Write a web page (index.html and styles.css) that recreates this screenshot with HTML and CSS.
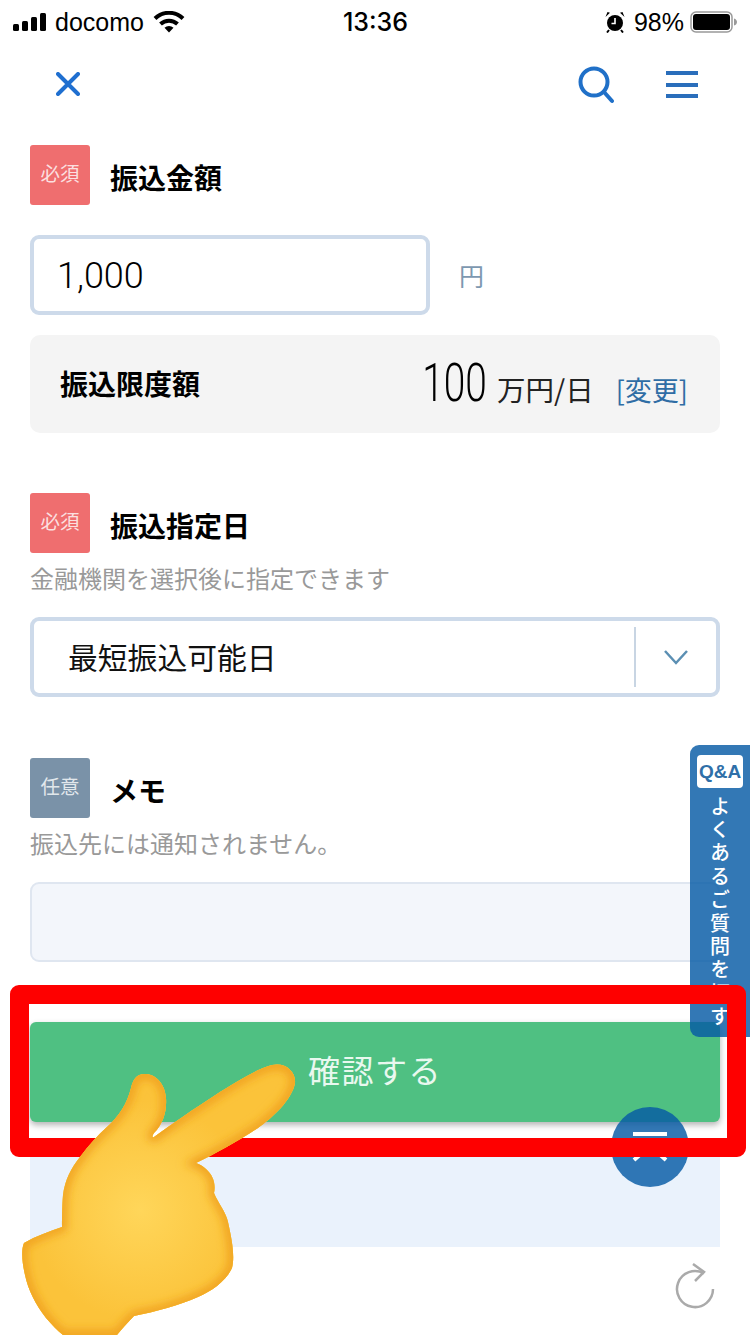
FILE: index.html

```html
<!DOCTYPE html>
<html lang="ja">
<head>
  <meta charset="UTF-8" />
  <meta name="viewport" content="width=device-width, initial-scale=1.0"/>
  <title>振込</title>
  <link rel="stylesheet" href="styles.css">
</head>
<body>
  <div class="status">
    <div class="status-left">
      <svg class="signal" width="34" height="18" viewBox="0 0 34 18">
        <rect x="0" y="11" width="6" height="7" rx="1.5"/>
        <rect x="9" y="8" width="6" height="10" rx="1.5"/>
        <rect x="18" y="4" width="6" height="14" rx="1.5"/>
        <rect x="27" y="0" width="6" height="18" rx="1.5"/>
      </svg>
      <span class="carrier">docomo</span>
      <svg class="wifi" width="32" height="22" viewBox="0 0 32 22">
        <path d="M2 7.5a20 20 0 0 1 28 0" fill="none" stroke="#000" stroke-width="4"/>
        <path d="M7.5 13a12.5 12.5 0 0 1 17 0" fill="none" stroke="#000" stroke-width="4"/>
        <path d="M11.5 16.8a6.5 6.5 0 0 1 9 0L16 21.5z"/>
      </svg>
    </div>
    <div class="status-time">13:36</div>
    <div class="status-right">
      <svg class="alarm" width="22" height="22" viewBox="0 0 22 22">
        <circle cx="11" cy="12" r="8"/>
        <path d="M1.5 6L6 1.8 3.5 1zM20.5 6L16 1.8 18.5 1z"/>
        <path d="M11 7v5.5H7.5" fill="none" stroke="#fff" stroke-width="1.6"/>
        <path d="M5 19l-2 2.5M17 19l2 2.5" stroke="#000" stroke-width="2"/>
      </svg>
      <span class="battery-text">98%</span>
      <svg class="battery" width="48" height="22" viewBox="0 0 48 22">
        <rect x="1" y="1" width="41" height="20" rx="5" fill="#fff" stroke="#999" stroke-width="1.5"/>
        <rect x="3" y="3" width="37" height="16" rx="3"/>
        <path d="M44 7.5c2 .5 3 2 3 3.500s-1 3-3 3.500z" fill="#999"/>
      </svg>
    </div>
  </div>

  <div class="nav">
    <svg class="nav-close" width="24" height="24" viewBox="0 0 24 24">
      <path d="M2 2l20 20M22 2L2 22" fill="none" stroke="#1f6fd0" stroke-width="4" stroke-linecap="round"/>
    </svg>
    <div class="nav-right">
      <svg width="36" height="38" viewBox="0 0 36 38">
        <circle cx="16" cy="16" r="13.5" fill="none" stroke="#2070c8" stroke-width="4"/>
        <path d="M26 26l8 9" fill="none" stroke="#2070c8" stroke-width="4" stroke-linecap="round"/>
      </svg>
      <div class="burger"><i></i><i></i><i></i></div>
    </div>
  </div>

  <div class="form">
    <div class="field-head">
      <span class="badge">必須</span>
      <span class="field-title">振込金額</span>
    </div>
    <div class="amount-row">
      <input class="amount-input" type="text" value="1,000">
      <span class="yen">円</span>
    </div>
    <div class="limit-box">
      <span class="limit-title">振込限度額</span>
      <div class="limit-value">
        <span class="limit-num">100</span>
        <span class="limit-unit">万円/日</span>
        <span class="limit-link">[変更]</span>
      </div>
    </div>

    <div class="field-head date-head">
      <span class="badge">必須</span>
      <span class="field-title">振込指定日</span>
    </div>
    <p class="hint">金融機関を選択後に指定できます</p>
    <div class="select-box">
      <span class="select-text">最短振込可能日</span>
      <span class="select-arrow">
        <svg width="26" height="16" viewBox="0 0 26 16">
          <path d="M2 2l11 12L24 2" fill="none" stroke="#5b8fb3" stroke-width="2.5"/>
        </svg>
      </span>
    </div>

    <div class="field-head memo-head">
      <span class="badge badge-optional">任意</span>
      <span class="field-title">メモ</span>
    </div>
    <p class="hint">振込先には通知されません。</p>
    <input class="memo-input" type="text">

    <button class="confirm">確認する</button>
    <div class="panel"></div>
  </div>

  <div class="page-foot">
    <svg width="40" height="46" viewBox="0 0 40 46">
      <path d="M29 10.5A18 18 0 1 0 38 26" fill="none" stroke="#aaa" stroke-width="2.5"/>
      <path d="M18 1l11 8-9 9" fill="none" stroke="#aaa" stroke-width="2.5"/>
    </svg>
  </div>

  <!-- floating stuff over the page -->
  <div class="qa-tab">
    <div class="qa-mark">Q&amp;A</div>
    <div class="qa-text">よくあるご質問を探す</div>
  </div>
  <div class="round-btn">
    <i class="round-bar"></i>
    <svg class="round-chevron" width="36" height="20" viewBox="0 0 36 20">
      <path d="M2 18L18 4l16 14" fill="none" stroke="#fff" stroke-width="4"/>
    </svg>
  </div>
  <div class="red-frame"></div>
  <svg class="hand" width="300" height="285" viewBox="0 1050 300 285">
    <defs>
      <path id="handShape" d="M295 1083C296 1071 285 1062 272 1065C262 1067 240 1079 214 1096C195 1108 172 1124 154 1137C152 1138 152 1136 154 1133C163 1124 167 1111 166 1098C165 1084 156 1074 145 1074C136 1074 133 1080 131 1088C127 1104 119 1116 108 1126C98 1135 88 1146 80 1157C71 1168 65 1180 63 1195C62 1208 62 1218 62 1227C50 1231 36 1236 24 1243C21 1250 22 1262 25 1275C28 1290 36 1305 46 1318C52 1325 58 1331 63 1335L117 1335C122 1329 128 1322 134 1316C155 1312 180 1305 198 1297C212 1291 226 1281 232 1268C235 1256 232 1240 228 1222C226 1212 218 1203 214 1193C216 1184 213 1175 206 1169C203 1166 199 1164 196 1163C215 1154 240 1140 258 1128C272 1118 292 1100 295 1083Z"/>
      <clipPath id="handClip"><use href="#handShape"/></clipPath>
      <filter id="soft" x="-20%" y="-20%" width="140%" height="140%"><feGaussianBlur stdDeviation="5"/></filter>
      <radialGradient id="skin" cx="140" cy="1210" r="110" gradientUnits="userSpaceOnUse">
        <stop offset="0" stop-color="#ffd65a"/>
        <stop offset="1" stop-color="#fbc33a"/>
      </radialGradient>
    </defs>
    <g clip-path="url(#handClip)">
      <rect x="0" y="1050" width="300" height="285" fill="#fbc33a"/>
      <rect x="0" y="1050" width="300" height="285" fill="url(#skin)"/>
      <use href="#handShape" fill="none" stroke="#ef9f1c" stroke-width="9" filter="url(#soft)"/>
    </g>
  </svg>
</body>
</html>
```

FILE: styles.css

```css
* { box-sizing: border-box; }
body {
  margin: 0;
  width: 750px;
  height: 1335px;
  overflow: hidden;
  position: relative;
  background: #fff;
  color: #000;
  font-family: "Noto Sans CJK JP", "Noto Sans", sans-serif;
}

/* status bar */
.status {
  height: 44px;
  padding: 0 12px 0 13px;
  display: flex;
  align-items: center;
  justify-content: space-between;
  font-family: "Liberation Sans", sans-serif;
  font-size: 25px;
}
.status-left, .status-right { flex: 1; display: flex; align-items: center; }
.status-right { justify-content: flex-end; }
.carrier { margin-left: 8px; }
.wifi { margin-left: 9px; }
.status-time { font-weight: 500; font-size: 25px; font-family: "Inter", sans-serif; }
.battery-text { margin: 0 6px 0 8px; }

/* nav */
.nav {
  height: 81px;
  padding: 0 52px 0 56px;
  display: flex;
  align-items: center;
  justify-content: space-between;
}
.nav-close { margin-bottom: 2px; }
.nav-right { display: flex; align-items: center; gap: 52px; }
.burger { display: flex; flex-direction: column; gap: 7.5px; }
.burger i { display: block; width: 32px; height: 4px; background: #2a6ebb; }

/* form */
.form { padding: 20px 30px 0; }
.field-head { display: flex; align-items: center; gap: 20px; height: 60px; }
.date-head { margin-top: 60px; }
.memo-head { margin-top: 61px; }
.badge {
  width: 60px;
  height: 60px;
  padding-bottom: 5px;
  border-radius: 3px;
  background: #ef6e6f;
  color: rgba(255, 255, 255, .8);
  font-size: 19.5px;
  display: flex;
  align-items: center;
  justify-content: center;
}
.badge-optional { background: #7a92a8; }
.field-title { font-size: 28px; font-weight: 700; padding-top: 4px; }
.amount-row { margin-top: 30px; display: flex; align-items: center; gap: 29px; }
.amount-input {
  width: 400px;
  height: 80px;
  padding: 2px 23px 0;
  border: 4px solid #cddaea;
  border-radius: 9px;
  background: #fff;
  color: #000;
  font-family: "Roboto", sans-serif;
  font-weight: 300;
  font-size: 36px;
  outline: none;
}
.yen { font-size: 25px; color: #7d98b0; }
.limit-box {
  margin-top: 20px;
  height: 98px;
  padding: 0 32px 3px 30px;
  border-radius: 10px;
  background: #f4f4f4;
  display: flex;
  align-items: center;
  justify-content: space-between;
}
.limit-title { font-size: 28px; font-weight: 700; }
.limit-value { display: flex; align-items: baseline; }
.limit-num {
  font-family: "Roboto", sans-serif;
  font-weight: 300;
  font-size: 54px;
  line-height: 1;
  display: inline-block;
  transform: scaleX(.72);
  transform-origin: right;
  margin-left: -24px;
}
.limit-unit { margin-left: 10px; font-size: 28.5px; color: #222; }
.limit-link { margin-left: 22px; font-size: 27px; color: #2f6da5; }
.hint {
  margin: 0;
  height: 64px;
  padding-top: 6px;
  font-size: 24px;
  line-height: 38px;
  color: #999;
}
.select-box {
  height: 80px;
  border: 4px solid #cddaea;
  border-radius: 9px;
  display: flex;
  align-items: center;
  justify-content: space-between;
}
.select-text { margin: 0 0 3px 34px; font-size: 29.8px; color: #111; }
.select-arrow {
  width: 82px;
  height: 60px;
  border-left: 2px solid #c8d5e3;
  display: flex;
  align-items: center;
  justify-content: center;
}
.memo-input {
  display: block;
  width: 690px;
  height: 80px;
  border: 2px solid #dfe6f0;
  border-radius: 9px;
  background: #f3f6fb;
  outline: none;
}
.confirm {
  display: block;
  width: 690px;
  height: 100px;
  margin-top: 60px;
  padding-bottom: 8px;
  border: 0;
  border-radius: 6px;
  background: #4fc082;
  color: #e9f8ef;
  font-family: inherit;
  font-size: 32px;
  letter-spacing: 1.5px;
  box-shadow: 0 3px 6px rgba(0, 0, 0, .3);
}
.panel { margin-top: 18px; height: 107px; background: #eaf2fc; }
.page-foot { padding: 16px 35px 0 0; display: flex; justify-content: flex-end; }

/* overlays */
.qa-tab {
  position: absolute;
  left: 690px;
  top: 745px;
  width: 60px;
  height: 292px;
  padding-top: 10px;
  border-radius: 9px 0 0 9px;
  background: rgba(6, 90, 165, .82);
  display: flex;
  flex-direction: column;
  align-items: center;
}
.qa-mark {
  width: 46px;
  height: 33px;
  border-radius: 4px;
  background: #fff;
  color: #2f6fa8;
  font-family: "Liberation Sans", sans-serif;
  font-size: 19px;
  font-weight: 700;
  line-height: 33px;
  text-align: center;
}
.qa-text {
  margin-top: 8px;
  writing-mode: vertical-rl;
  color: #fff;
  font-size: 20px;
  font-weight: 500;
  letter-spacing: 3.4px;
}
.round-btn {
  position: absolute;
  left: 611px;
  top: 1107px;
  width: 78px;
  height: 80px;
  border-radius: 50%;
  background: rgba(6, 90, 165, .82);
  display: flex;
  flex-direction: column;
  align-items: center;
  padding-top: 25px;
}
.round-bar { display: block; width: 34px; height: 4px; background: #fff; }
.round-chevron { margin-top: 6px; }
.red-frame {
  position: absolute;
  left: 10px;
  top: 985px;
  width: 736px;
  height: 172px;
  border: 19px solid #fe0000;
  border-radius: 9px;
}
.hand { position: absolute; left: 0; top: 1050px; }
```
